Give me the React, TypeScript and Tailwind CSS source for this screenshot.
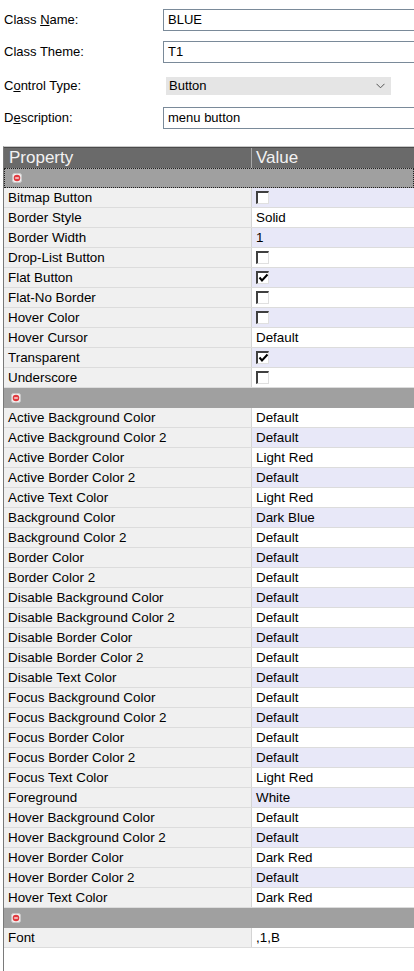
import React from 'react';

type Row = { name: string; value: string; check?: boolean };

const GROUPS: Row[][] = [
  [
    { name: 'Bitmap Button', value: '', check: false },
    { name: 'Border Style', value: 'Solid' },
    { name: 'Border Width', value: '1' },
    { name: 'Drop-List Button', value: '', check: false },
    { name: 'Flat Button', value: '', check: true },
    { name: 'Flat-No Border', value: '', check: false },
    { name: 'Hover Color', value: '', check: false },
    { name: 'Hover Cursor', value: 'Default' },
    { name: 'Transparent', value: '', check: true },
    { name: 'Underscore', value: '', check: false },
  ],
  [
    { name: 'Active Background Color', value: 'Default' },
    { name: 'Active Background Color 2', value: 'Default' },
    { name: 'Active Border Color', value: 'Light Red' },
    { name: 'Active Border Color 2', value: 'Default' },
    { name: 'Active Text Color', value: 'Light Red' },
    { name: 'Background Color', value: 'Dark Blue' },
    { name: 'Background Color 2', value: 'Default' },
    { name: 'Border Color', value: 'Default' },
    { name: 'Border Color 2', value: 'Default' },
    { name: 'Disable Background Color', value: 'Default' },
    { name: 'Disable Background Color 2', value: 'Default' },
    { name: 'Disable Border Color', value: 'Default' },
    { name: 'Disable Border Color 2', value: 'Default' },
    { name: 'Disable Text Color', value: 'Default' },
    { name: 'Focus Background Color', value: 'Default' },
    { name: 'Focus Background Color 2', value: 'Default' },
    { name: 'Focus Border Color', value: 'Default' },
    { name: 'Focus Border Color 2', value: 'Default' },
    { name: 'Focus Text Color', value: 'Light Red' },
    { name: 'Foreground', value: 'White' },
    { name: 'Hover Background Color', value: 'Default' },
    { name: 'Hover Background Color 2', value: 'Default' },
    { name: 'Hover Border Color', value: 'Dark Red' },
    { name: 'Hover Border Color 2', value: 'Default' },
    { name: 'Hover Text Color', value: 'Dark Red' },
  ],
  [{ name: 'Font', value: ',1,B' }],
];

function CollapseIcon() {
  return (
    <svg width="10" height="10" viewBox="0 0 10 10">
      <rect x="0.5" y="0.5" width="9" height="9" rx="2" fill="#f2f2f2" stroke="#c8c8c8" />
      <circle cx="5" cy="5" r="3.3" fill="#e0393e" />
      <line x1="3.2" y1="5" x2="6.8" y2="5" stroke="#fff" strokeWidth="1.2" />
    </svg>
  );
}

function CheckBox({ checked }: { checked: boolean }) {
  return (
    <span className="relative block w-[13px] h-[13px] bg-white border-t-2 border-l-2 border-t-[#404040] border-l-[#404040] border-r border-b border-r-[#e0e0e0] border-b-[#e0e0e0]">
      {checked && (
        <svg className="absolute left-[0px] top-[0px]" width="11" height="11" viewBox="0 0 11 11">
          <polyline points="1.5,4.5 4,7.5 9.5,1.5" fill="none" stroke="#000" strokeWidth="2" />
        </svg>
      )}
    </span>
  );
}

function FormRow({ label, children, className = '' }: { label: React.ReactNode; children: React.ReactNode; className?: string }) {
  return (
    <div className={`flex items-center h-[22px] ${className}`}>
      <div className="w-[163px] shrink-0 pl-[4px] text-[13px] text-[#000]">{label}</div>
      {children}
    </div>
  );
}

function TextBox({ value }: { value: string }) {
  return (
    <div className="h-[22px] w-[260px] shrink-0 border border-[#7a8a99] bg-white pl-[4px] text-[13px] leading-[20px] text-black">
      {value}
    </div>
  );
}

export default function App() {
  let idx = 0;
  return (
    <div className="w-[414px] h-[971px] overflow-hidden bg-white" style={{ fontFamily: '"Liberation Sans", Arial, sans-serif' }}>
      {/* Form */}
      <div className="pt-[9px]">
        <FormRow label={<>Class <u>N</u>ame:</>}>
          <TextBox value="BLUE" />
        </FormRow>
        <FormRow label="Class Theme:" className="mt-[10px]">
          <TextBox value="T1" />
        </FormRow>
        <FormRow label={<>C<u>o</u>ntrol Type:</>} className="mt-[12px]">
          <div className="ml-[3px] h-[18px] w-[225px] bg-[#e5e5e5] flex items-center justify-between pl-[3px] pr-[6px] text-[13px] text-black">
            <span>Button</span>
            <svg width="9" height="6" viewBox="0 0 9 6">
              <polyline points="0.5,0.8 4.5,4.8 8.5,0.8" fill="none" stroke="#555" strokeWidth="1" />
            </svg>
          </div>
        </FormRow>
        <FormRow label={<>D<u>e</u>scription:</>} className="mt-[10px]">
          <TextBox value="menu button" />
        </FormRow>
      </div>

      {/* Property grid */}
      <div className="mt-[17px] ml-[3px] h-[900px] border-l border-[#7a7a7a] border-t border-t-[#c8c8c8]">
        <div className="flex h-[21px] bg-[#6a6a6a] border-t border-[#4a4a4a] text-[17px] leading-[20px] text-[#f2f2f2]">
          <div className="w-[248px] pl-[5px] border-r border-[#a8a8a8]">Property</div>
          <div className="flex-1 pl-[4px]">Value</div>
        </div>
        {GROUPS.map((g, gi) => {
          const headIdx = idx++;
          return (
            <div key={gi}>
              <div
                className={`flex items-center h-[20px] bg-[#a0a0a0] pl-[7px] ${
                  headIdx === 0 ? 'border border-dotted border-[#202020]' : 'border-b border-[#a0a0a0]'
                }`}
              >
                <CollapseIcon />
              </div>
              {g.map((r) => {
                const i = idx++;
                const lav = i % 2 === 1;
                return (
                  <div key={r.name} className="flex h-[20px] border-b border-[#dcdcdc] text-[13.4px] leading-[19px] text-black">
                    <div className="w-[248px] pl-[4px] bg-[#f0f0f0] border-r border-[#d4d4d4] whitespace-nowrap">{r.name}</div>
                    <div className={`flex-1 pl-[4px] flex items-center ${lav ? 'bg-[#e8e8f8]' : 'bg-white'}`}>
                      {r.check !== undefined ? <CheckBox checked={r.check} /> : r.value}
                    </div>
                  </div>
                );
              })}
            </div>
          );
        })}
      </div>
    </div>
  );
}
